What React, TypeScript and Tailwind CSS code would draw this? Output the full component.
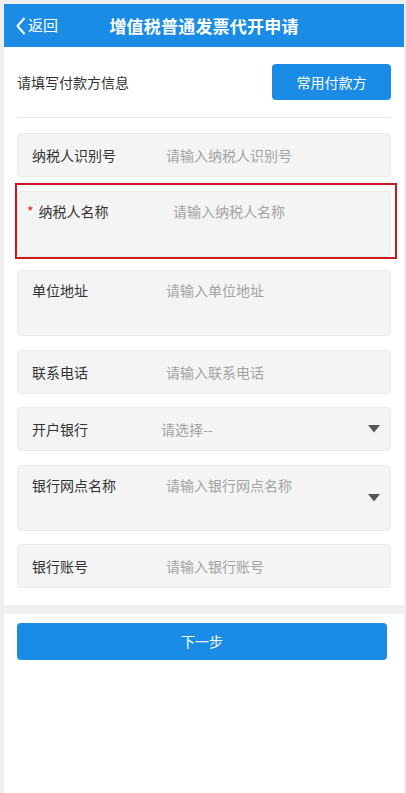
import React from 'react'

type Field = {
  label: string
  placeholder: string
  tall?: boolean
  select?: boolean
  required?: boolean
}

const fields: Field[] = [
  { label: '纳税人识别号', placeholder: '请输入纳税人识别号' },
  { label: '纳税人名称', placeholder: '请输入纳税人名称', tall: true, required: true },
  { label: '单位地址', placeholder: '请输入单位地址', tall: true },
  { label: '联系电话', placeholder: '请输入联系电话' },
  { label: '开户银行', placeholder: '请选择--', select: true },
  { label: '银行网点名称', placeholder: '请输入银行网点名称', tall: true, select: true },
  { label: '银行账号', placeholder: '请输入银行账号' },
]

function Caret() {
  return (
    <svg width="12" height="8" viewBox="0 0 12 8" className="shrink-0">
      <polygon points="0,0 12,0 6,7.5" fill="#555555" />
    </svg>
  )
}

function FormField({ field }: { field: Field }) {
  const box = (
    <div
      className={
        'relative flex rounded-[4px] border border-[#ebebeb] bg-[#f4f4f4] text-[14px] leading-[20px] ' +
        (field.tall ? 'h-[66px] pt-[9px]' : 'h-[44px] items-center')
      }
    >
      <div className={'flex shrink-0 ' + (field.required ? 'w-[155px] pl-[9px]' : 'w-[148px] pl-[14px]')}>
        {field.required && <span className="mr-[5px] text-[#e02020]">*</span>}
        <span className="text-[#333333]">{field.label}</span>
      </div>
      <span className={'flex-1 text-[#a3a3a3] ' + (field.label === '开户银行' ? '-ml-[5px]' : '')}>
        {field.placeholder}
      </span>
      {field.select && (
        <div className="absolute right-[10px] top-0 bottom-0 flex items-center">
          <Caret />
        </div>
      )}
    </div>
  )

  if (field.required) {
    return (
      <div className="relative">
        {box}
        <div className="pointer-events-none absolute -left-[2px] -top-[8px] -right-[6px] -bottom-[2px] border-2 border-[#cc1a1f]" />
      </div>
    )
  }
  return box
}

export default function App() {
  return (
    <div
      className="min-h-screen bg-[#eeeeee] pl-[4px] pr-[2px] pt-[4px]"
      style={{ fontFamily: '"Noto Sans CJK SC", "Noto Sans", sans-serif' }}
    >
      <div className="min-h-[789px] bg-white">
        {/* Header */}
        <div className="relative flex h-[43px] items-center justify-center bg-[#1a8ce6] text-white">
          <div className="absolute left-[12px] top-0 bottom-0 flex items-center">
            <svg width="10" height="18" viewBox="0 0 10 18" className="mr-[2px]">
              <polyline points="8.5,1 1.5,9 8.5,17" fill="none" stroke="white" strokeWidth="2" strokeLinejoin="round" />
            </svg>
            <span className="text-[15px]">返回</span>
          </div>
          <h1 className="text-[17px] font-bold tracking-[0.2px]">增值税普通发票代开申请</h1>
        </div>

        <div className="px-[13px]">
          {/* Payer row */}
          <div className="flex items-center justify-between pt-[17px] pb-[17px] border-b border-[#e6e6e6]">
            <span className="text-[14px] text-[#333333]">请填写付款方信息</span>
            <button className="h-[36px] w-[119px] rounded-[4px] bg-[#1a8ce6] text-[14px] text-white">常用付款方</button>
          </div>

          {/* Fields */}
          <div className="flex flex-col gap-[13.5px] pt-[15px] pb-[16.5px]">
            {fields.map((f) => (
              <FormField key={f.label} field={f} />
            ))}
          </div>
        </div>

        <div className="h-[9px] bg-[#efefef]" />

        <div className="pl-[13px] pr-[17px] pt-[9px]">
          <button className="h-[37px] w-full rounded-[4px] bg-[#1a8ce6] text-[14px] text-white">下一步</button>
        </div>
      </div>
    </div>
  )
}
